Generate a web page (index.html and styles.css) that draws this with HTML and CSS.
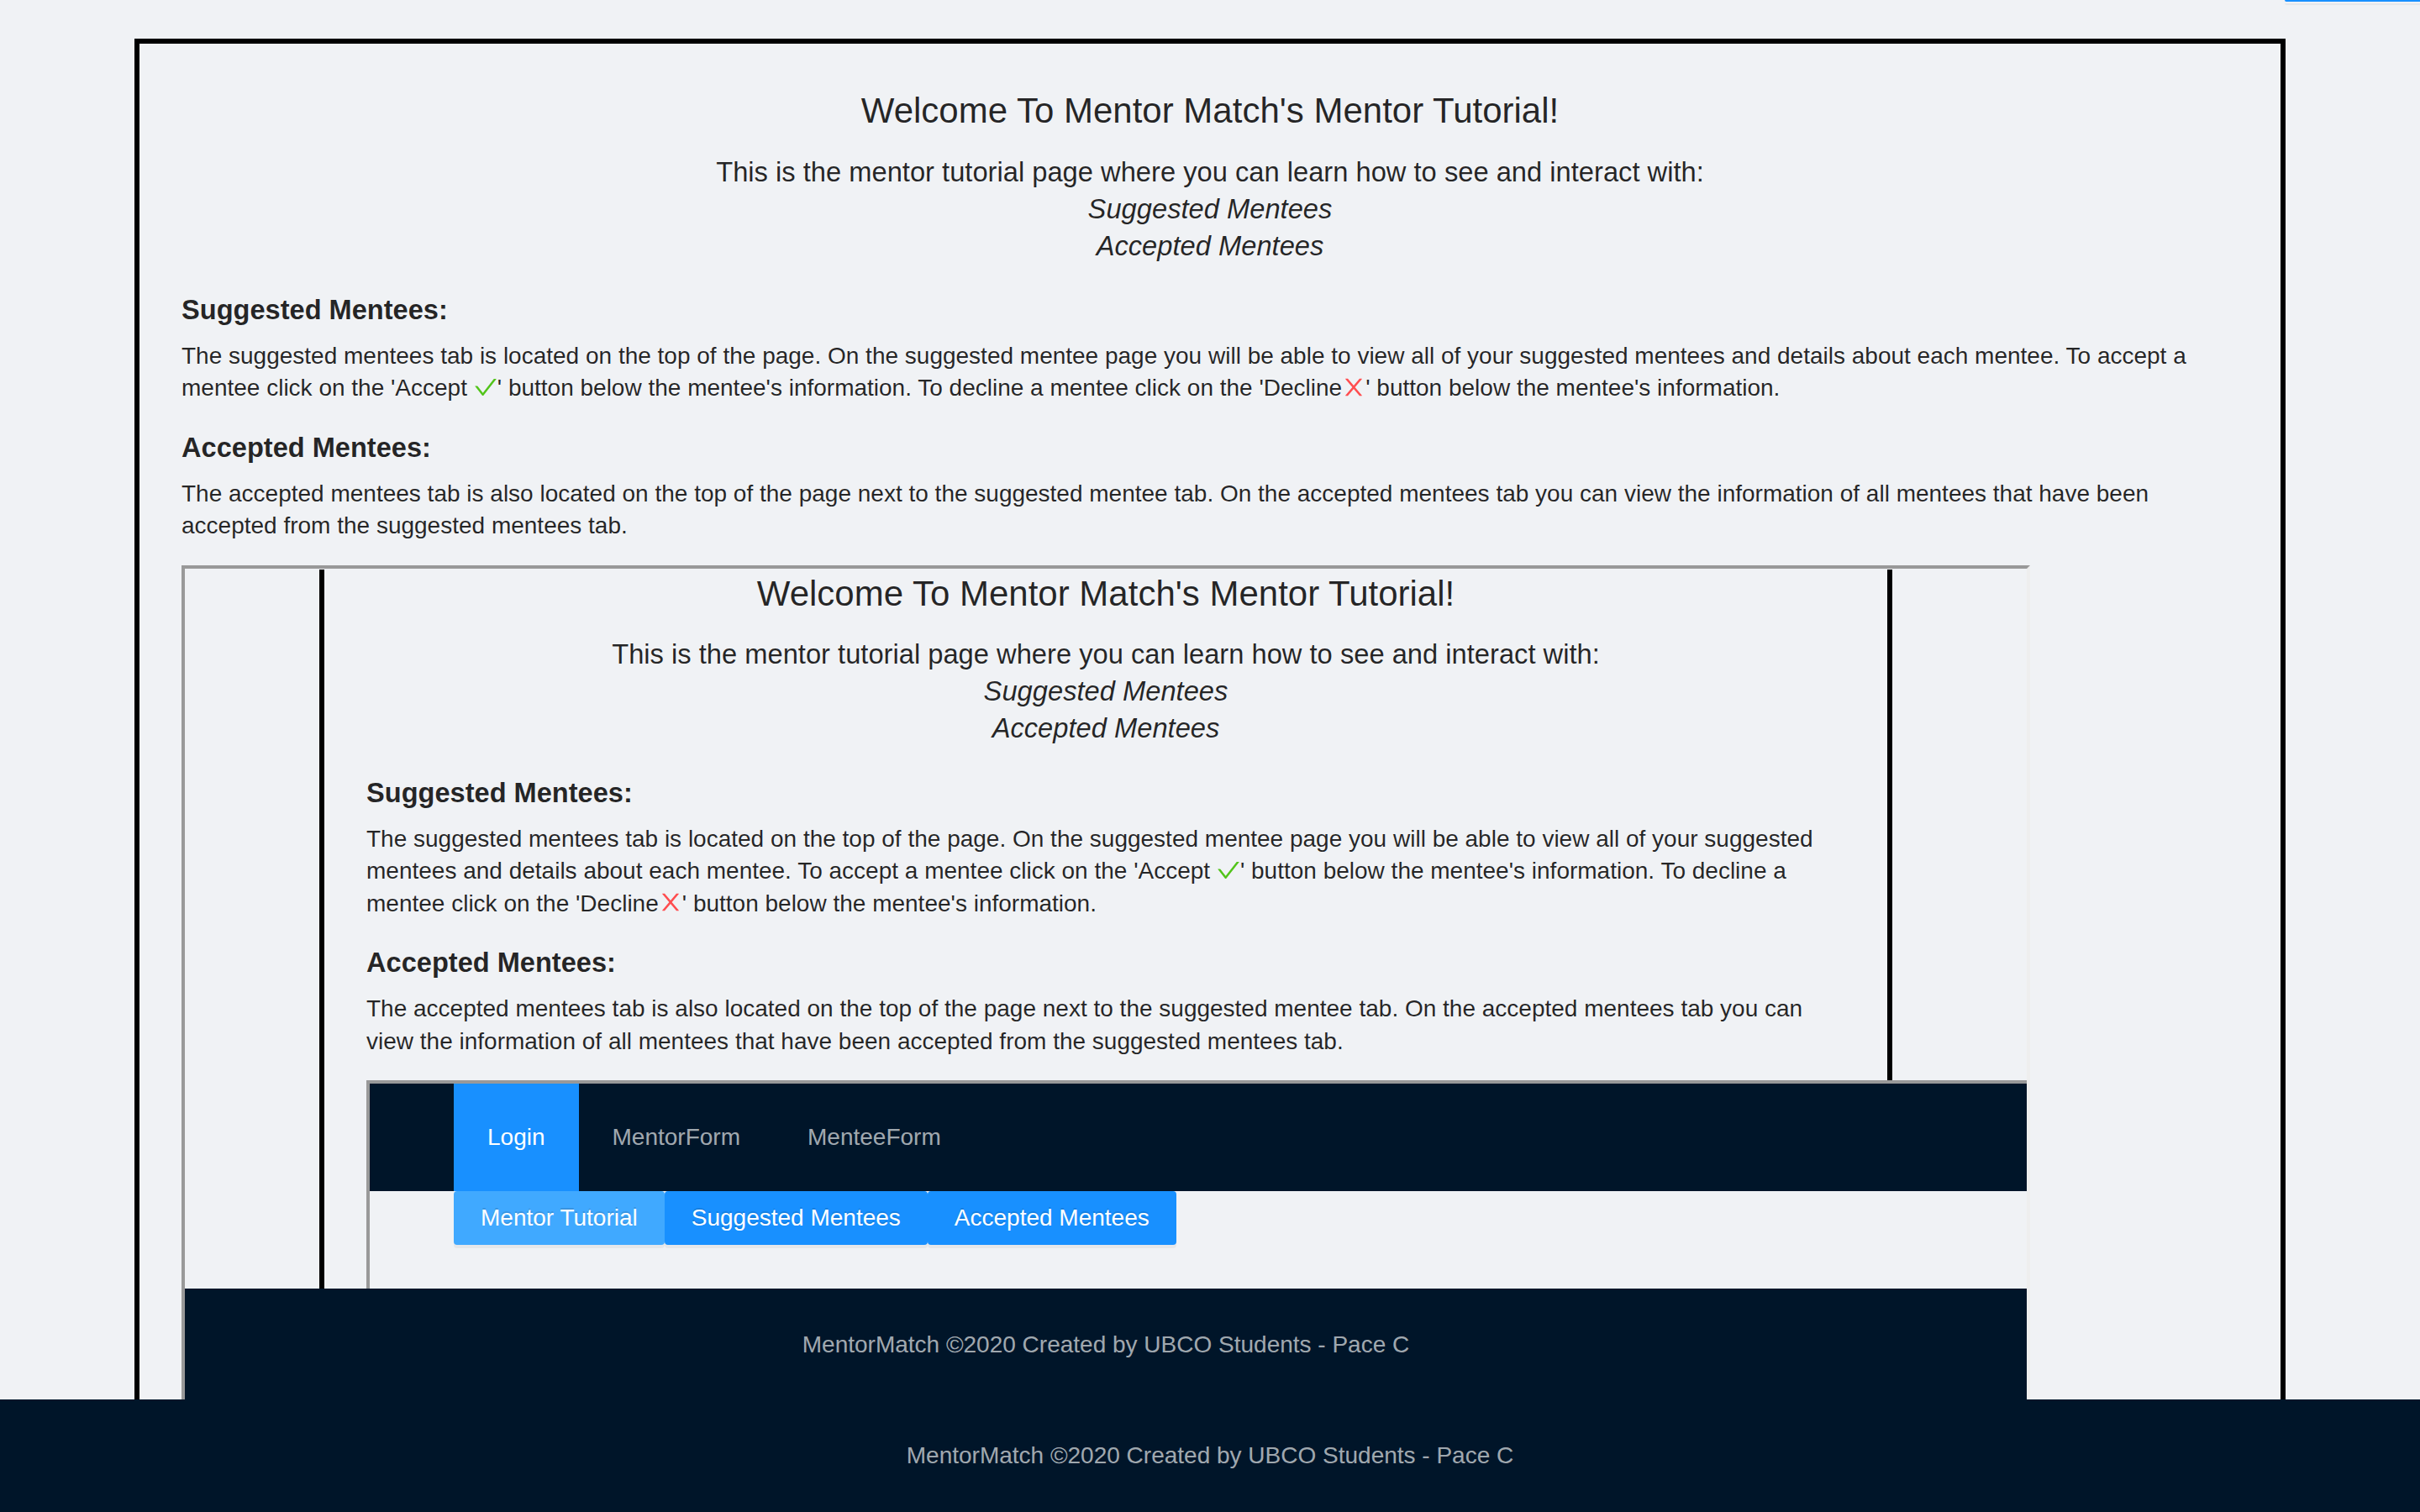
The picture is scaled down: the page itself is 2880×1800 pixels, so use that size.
FILE: index.html
```html
<!DOCTYPE html>
<html lang="en">
<head>
<meta charset="utf-8">
<title>Mentor Tutorial</title>
<link rel="stylesheet" href="styles.css">
</head>
<body>
<div class="top-btn"></div>
<div class="page">
  <div class="box">
    <h1 class="title">Welcome To Mentor Match's Mentor Tutorial!</h1>
    <p class="intro">This is the mentor tutorial page where you can learn how to see and interact with:<br><i>Suggested Mentees</i><br><i>Accepted Mentees</i></p>
    <h3 class="sec sec-first">Suggested Mentees:</h3>
    <p class="body">The suggested mentees tab is located on the top of the page. On the suggested mentee page you will be able to view all of your suggested mentees and details about each mentee. To accept a mentee click on the 'Accept <svg class="ico ok" viewBox="64 64 896 896"><path d="M912 190h-69.9c-9.8 0-19.1 4.5-25.1 12.2L404.7 724.5 207 474a32 32 0 00-25.1-12.2H112c-6.7 0-10.4 7.7-6.3 12.9l273.9 347c12.8 16.2 37.4 16.2 50.3 0l488.4-618.9c4.1-5.1.4-12.8-6.3-12.8z"/></svg>' button below the mentee's information. To decline a mentee click on the 'Decline<svg class="ico no" viewBox="64 64 896 896"><path d="M563.8 512l262.5-312.9c4.4-5.2.7-13.1-6.1-13.1h-79.8c-4.7 0-9.2 2.1-12.3 5.7L511.6 449.8 295.1 191.7c-3-3.6-7.5-5.7-12.3-5.7H203c-6.8 0-10.5 7.9-6.1 13.1L459.4 512 196.9 824.9A7.95 7.95 0 00203 838h79.8c4.7 0 9.2-2.1 12.3-5.7l216.5-258.1 216.5 258.1c3 3.6 7.5 5.7 12.3 5.7h79.8c6.8 0 10.5-7.9 6.1-13.1L563.8 512z"/></svg>' button below the mentee's information.</p>
    <h3 class="sec">Accepted Mentees:</h3>
    <p class="body">The accepted mentees tab is also located on the top of the page next to the suggested mentee tab. On the accepted mentees tab you can view the information of all mentees that have been accepted from the suggested mentees tab.</p>

    <div class="frame frame-outer">
      <div class="box box-inner">
        <h1 class="title">Welcome To Mentor Match's Mentor Tutorial!</h1>
        <p class="intro">This is the mentor tutorial page where you can learn how to see and interact with:<br><i>Suggested Mentees</i><br><i>Accepted Mentees</i></p>
        <h3 class="sec sec-first">Suggested Mentees:</h3>
        <p class="body">The suggested mentees tab is located on the top of the page. On the suggested mentee page you will be able to view all of your suggested mentees and details about each mentee. To accept a mentee click on the 'Accept <svg class="ico ok" viewBox="64 64 896 896"><path d="M912 190h-69.9c-9.8 0-19.1 4.5-25.1 12.2L404.7 724.5 207 474a32 32 0 00-25.1-12.2H112c-6.7 0-10.4 7.7-6.3 12.9l273.9 347c12.8 16.2 37.4 16.2 50.3 0l488.4-618.9c4.1-5.1.4-12.8-6.3-12.8z"/></svg>' button below the mentee's information. To decline a mentee click on the 'Decline<svg class="ico no" viewBox="64 64 896 896"><path d="M563.8 512l262.5-312.9c4.4-5.2.7-13.1-6.1-13.1h-79.8c-4.7 0-9.2 2.1-12.3 5.7L511.6 449.8 295.1 191.7c-3-3.6-7.5-5.7-12.3-5.7H203c-6.8 0-10.5 7.9-6.1 13.1L459.4 512 196.9 824.9A7.95 7.95 0 00203 838h79.8c4.7 0 9.2-2.1 12.3-5.7l216.5-258.1 216.5 258.1c3 3.6 7.5 5.7 12.3 5.7h79.8c6.8 0 10.5-7.9 6.1-13.1L563.8 512z"/></svg>' button below the mentee's information.</p>
        <h3 class="sec">Accepted Mentees:</h3>
        <p class="body">The accepted mentees tab is also located on the top of the page next to the suggested mentee tab. On the accepted mentees tab you can view the information of all mentees that have been accepted from the suggested mentees tab.</p>

        <div class="frame frame-nested">
          <header class="app-header">
            <nav class="menu">
              <span class="menu-item selected">Login</span>
              <span class="menu-item">MentorForm</span>
              <span class="menu-item">MenteeForm</span>
            </nav>
          </header>
          <div class="tabs">
            <span class="tab-btn active">Mentor Tutorial</span>
            <span class="tab-btn">Suggested Mentees</span>
            <span class="tab-btn">Accepted Mentees</span>
          </div>
        </div>
      </div>
      <footer class="footer footer-inner">MentorMatch ©2020 Created by UBCO Students - Pace C</footer>
    </div>
  </div>
</div>
<footer class="footer footer-main">MentorMatch ©2020 Created by UBCO Students - Pace C</footer>
</body>
</html>
```

FILE: styles.css
```css
* { box-sizing: content-box; }

html, body {
  margin: 0;
  padding: 0;
}

body {
  position: relative;
  height: 1800px;
  overflow: hidden;
  background: #f0f2f5;
  font-family: "Liberation Sans", Arial, sans-serif;
  font-size: 28px;
  line-height: 1.375;
  color: rgba(0, 0, 0, 0.85);
}

.top-btn {
  position: absolute;
  top: 0;
  right: 0;
  width: 161px;
  height: 2px;
  background: #1890ff;
  border-bottom-left-radius: 2px;
  box-shadow: 0 4px 0 rgba(0, 0, 0, 0.045);
}

.page {
  padding-top: 46px;
}

.box {
  margin: 0 160px;
  border: 6px solid #000;
  border-bottom: none;
  padding: 0 50px;
}

.box-inner {
  border-top: none;
}

.title {
  margin: 51px 0 0;
  font-size: 42px;
  font-weight: 400;
  line-height: 1.375;
  text-align: center;
}

.box-inner .title {
  margin-top: 1px;
}

.intro {
  margin: 22px 0 0;
  font-size: 32.7px;
  line-height: 44px;
  text-align: center;
}

.box-inner .intro {
  margin-top: 21px;
}

.sec {
  margin: 29px 0 0;
  font-size: 32.6px;
  font-weight: 700;
  line-height: 44px;
}

.sec-first {
  margin-top: 32px;
}

.box-inner .sec-first {
  margin-top: 33px;
}

.body {
  margin: 14px 0 0;
  font-size: 28px;
  line-height: 38.5px;
}

.ico {
  width: 1em;
  height: 1em;
  vertical-align: -0.125em;
}

.ok { fill: #52c41a; }
.no { fill: #ff4d4f; }

.frame {
  border-style: solid;
  border-width: 4px;
  border-color: #999 #eee #eee #999;
  background: #f0f2f5;
}

.frame-outer {
  position: relative;
  margin-top: 27px;
  width: 2192px;
  height: 992px;
  overflow: hidden;
}

.frame-nested {
  margin-top: 27px;
  width: 2192px;
  height: 400px;
  overflow: hidden;
}

.app-header {
  height: 128px;
  padding: 0 100px;
  background: #001529;
  display: flex;
}

.menu {
  display: flex;
}

.menu-item {
  padding: 0 40px;
  line-height: 128px;
  color: rgba(255, 255, 255, 0.65);
}

.menu-item.selected {
  background: #1890ff;
  color: #fff;
}

.tabs {
  display: flex;
  padding-left: 100px;
}

.tab-btn {
  height: 60px;
  line-height: 60px;
  padding: 0 30px;
  border: 2px solid #1890ff;
  border-radius: 4px;
  background: #1890ff;
  color: #fff;
  text-shadow: 0 -2px 0 rgba(0, 0, 0, 0.12);
  box-shadow: 0 4px 0 rgba(0, 0, 0, 0.045);
}

.tab-btn.active {
  background: #40a9ff;
  border-color: #40a9ff;
}

.footer {
  padding: 48px 100px;
  background: #001529;
  color: rgba(255, 255, 255, 0.65);
  text-align: center;
  font-size: 28px;
  line-height: 38.5px;
}

.footer-inner {
  position: absolute;
  left: 0;
  right: 0;
  bottom: 0;
}

.footer-main {
  position: absolute;
  left: 0;
  right: 0;
  bottom: 0;
}
```
